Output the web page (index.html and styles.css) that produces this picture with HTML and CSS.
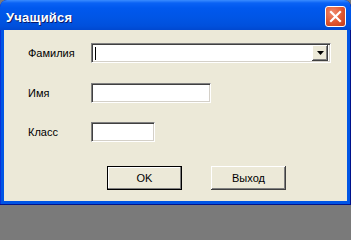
FILE: index.html
```html
<!DOCTYPE html>
<html lang="ru">
<head>
<meta charset="utf-8">
<title>Учащийся</title>
<link rel="stylesheet" href="styles.css">
</head>
<body>
<div class="window">
  <div class="titlebar">
    <span class="title">Учащийся</span>
    <span class="close">
      <svg width="13" height="13" viewBox="0 0 13 13"><path d="M2 2 L11 11 M11 2 L2 11" stroke="#fff" stroke-width="2.2" stroke-linecap="square"/></svg>
    </span>
  </div>
  <div class="client">
    <div class="form">
      <div class="row r1">
        <span class="lbl">Фамилия</span>
        <div class="field combo">
          <span class="caret"></span>
          <span class="drop"><svg width="7" height="4" viewBox="0 0 7 4"><path d="M0 0 H7 L3.5 4 Z" fill="#000"/></svg></span>
        </div>
      </div>
      <div class="row r2">
        <span class="lbl">Имя</span>
        <div class="field w120"></div>
      </div>
      <div class="row r3">
        <span class="lbl">Класс</span>
        <div class="field w64"></div>
      </div>
    </div>
    <div class="buttons">
      <button class="btn default">OK</button>
      <button class="btn">Выход</button>
    </div>
  </div>
</div>
</body>
</html>
```

FILE: styles.css
```css
html, body {
  margin: 0;
  padding: 0;
  background: #7a7a7a;
}
.window {
  width: 351px;
  height: 205px;
  box-sizing: border-box;
  display: flex;
  flex-direction: column;
  background: #0055e5;
  border-radius: 7px 7px 0 0;
  overflow: hidden;
  font-family: "Liberation Sans", Arial, sans-serif;
  font-size: 11px;
  color: #000;
  box-shadow: inset -1px -1px 0 #00138c, inset 1px 0 0 #0831d9;
}
.titlebar {
  height: 30px;
  flex: none;
  display: flex;
  align-items: center;
  justify-content: space-between;
  padding: 0 6px 0 6px;
  background: linear-gradient(to bottom, #3a8cff 0px, #0a62f5 3px, #0058ee 8px, #0055e5 18px, #0050dc 26px, #0048d0 30px);
  border-radius: 7px 7px 0 0;
}
.title {
  color: #fff;
  font-weight: bold;
  font-size: 13px;
  margin-top: 4px;
  text-shadow: 1px 1px 0 #0a1a6b;
  letter-spacing: 0.2px;
}
.close {
  width: 19px;
  height: 19px;
  margin-top: 2px;
  margin-right: -1px;
  border: 1px solid #fff;
  border-radius: 3px;
  background: radial-gradient(circle at 35% 30%, #f08a6e 0%, #e0562f 55%, #c23b18 100%);
  display: flex;
  align-items: center;
  justify-content: center;
}
.client {
  flex: 1;
  margin: 0 4px 4px 4px;
  background: #ece9d8;
  display: flex;
  flex-direction: column;
}
.form {
  display: flex;
  flex-direction: column;
  padding-left: 24px;
}
.row {
  display: flex;
  align-items: center;
  height: 20px;
}
.r1 { margin-top: 13px; }
.r2 { margin-top: 20px; }
.r3 { margin-top: 19px; }
.lbl {
  width: 63px;
  flex: none;
}
.field {
  box-sizing: border-box;
  height: 20px;
  background: #fff;
  border-top: 1px solid #808080;
  border-left: 1px solid #808080;
  border-right: 1px solid #ffffff;
  border-bottom: 1px solid #ffffff;
  box-shadow: inset 1px 1px 0 #404040, inset -1px -1px 0 #d4d0c8;
}
.combo {
  width: 240px;
  display: flex;
  align-items: center;
  justify-content: space-between;
  padding: 2px 2px 2px 3px;
}
.caret {
  width: 1px;
  height: 13px;
  background: #000;
}
.drop {
  width: 16px;
  height: 16px;
  box-sizing: border-box;
  background: #ece9d8;
  display: flex;
  align-items: center;
  justify-content: center;
  box-shadow: inset -1px -1px 0 #404040, inset 1px 1px 0 #ffffff, inset -2px -2px 0 #808080;
}
.w120 { width: 120px; }
.w64 { width: 64px; }
.buttons {
  display: flex;
  gap: 29px;
  padding-left: 103px;
  margin-top: 24px;
}
.btn {
  width: 75px;
  height: 24px;
  box-sizing: border-box;
  margin: 0;
  padding: 0;
  border: none;
  background: #ece9d8;
  font-family: "Liberation Sans", Arial, sans-serif;
  font-size: 11px;
  color: #000;
  box-shadow: inset -1px -1px 0 #404040, inset 1px 1px 0 #ffffff, inset -2px -2px 0 #808080;
}
.btn.default {
  border: 1px solid #000;
  box-shadow: inset -1px -1px 0 #808080, inset 1px 1px 0 #ffffff;
}
```
